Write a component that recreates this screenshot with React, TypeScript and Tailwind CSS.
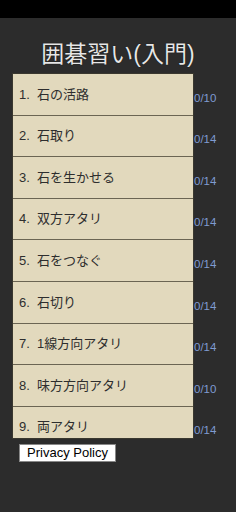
import React from 'react';

const lessons = [
  { title: '石の活路', score: '0/10' },
  { title: '石取り', score: '0/14' },
  { title: '石を生かせる', score: '0/14' },
  { title: '双方アタリ', score: '0/14' },
  { title: '石をつなぐ', score: '0/14' },
  { title: '石切り', score: '0/14' },
  { title: '1線方向アタリ', score: '0/14' },
  { title: '味方方向アタリ', score: '0/10' },
  { title: '両アタリ', score: '0/14' },
];

export default function App() {
  return (
    <div
      className="w-[236px] h-[512px] flex flex-col bg-[#2c2c2c] overflow-hidden"
      style={{ fontFamily: '"Liberation Sans", "Noto Sans CJK JP", sans-serif' }}
    >
      <div className="h-[18px] bg-black shrink-0" />

      <div className="h-[55px] flex items-center justify-center pt-[17px]">
        <h1 className="text-[23px] leading-none text-[#e6e6e6] [text-shadow:0_0_1px_#000]">
          囲碁習い(入門)
        </h1>
      </div>

      <div className="flex h-[366px] shrink-0">
        <div className="ml-[12px] w-[182px] h-[366px] overflow-hidden border border-[#3a382f] bg-[#e2d9bd]">
          {lessons.map((l, i) => (
            <div
              key={i}
              className="h-[41.6px] flex items-center pl-[6px] border-b-[1.5px] border-[#6b6553] text-[13px] text-[#2e2e2e]"
            >
              <span className="w-[18px]">{i + 1}.</span>
              <span>{l.title}</span>
            </div>
          ))}
        </div>
        <div className="flex flex-col h-[366px]">
          {lessons.map((l, i) => (
            <div key={i} className="h-[41.6px] shrink-0 flex items-center pt-[9px] text-[11.5px] text-[#7f9bd2]">
              {l.score}
            </div>
          ))}
        </div>
      </div>

      <div className="ml-[19px] mt-[1px]">
        <button className="w-[97px] h-[18px] bg-white border border-[#888] text-[13px] leading-none text-black">
          Privacy Policy
        </button>
      </div>
    </div>
  );
}
